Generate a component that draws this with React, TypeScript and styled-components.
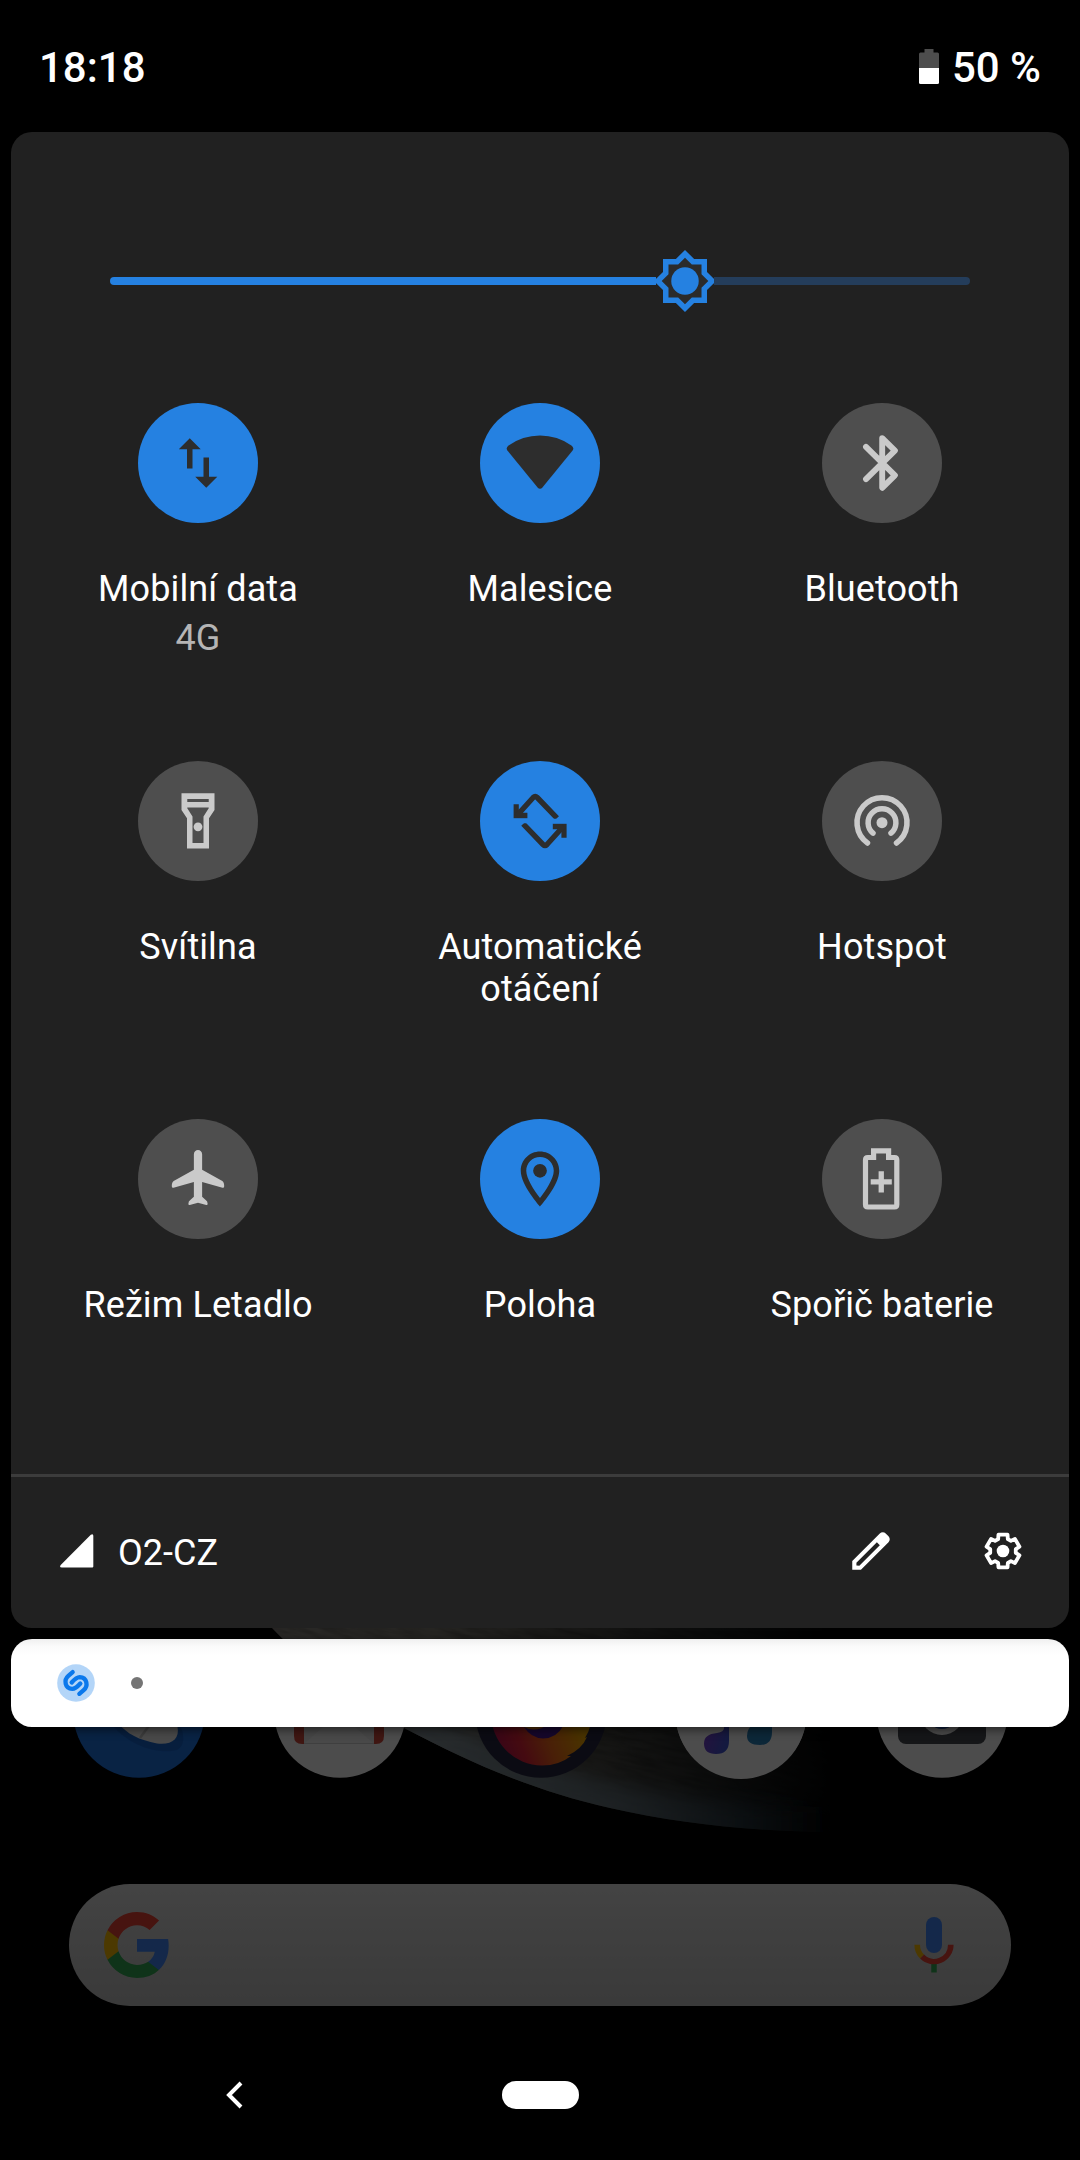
import React from "react";
import styled, { createGlobalStyle } from "styled-components";

const ACCENT = "#2581e1";
const SURFACE = "#212121";

const GlobalStyle = createGlobalStyle`
  *, *::before, *::after { box-sizing: border-box; }
  body {
    margin: 0;
    background: #000;
    font-family: Roboto, "Noto Sans", sans-serif;
    color: #fff;
  }
  svg { display: block; flex: none; }
`;

const Screen = styled.div`
  display: grid;
  grid-template: 2160px / 1080px;
  width: 1080px;
  height: 2160px;
  overflow: hidden;
  background: #000;
  > * { grid-area: 1 / 1; }
`;

/* ---------- Launcher behind the shade ---------- */

const Home = styled.div`
  display: grid;
  grid-template: 2160px / 1080px;
  opacity: 0.3;
  > * { grid-area: 1 / 1; }
`;

const HomeContent = styled.div`
  display: flex;
  flex-direction: column;
  padding: 1647px 69px 0;
`;

const Dock = styled.div`
  display: flex;
  justify-content: space-between;
  padding: 0 3px 0 4px;
  margin-bottom: 105px;
`;

const SearchBar = styled.div`
  display: flex;
  align-items: center;
  justify-content: space-between;
  height: 122px;
  padding: 0 57px 0 35px;
  border-radius: 61px;
  background: linear-gradient(#dedede, #bfbfbf);
`;

/* ---------- Shade ---------- */

const Shade = styled.div`
  display: flex;
  flex-direction: column;
  z-index: 1;
`;

const StatusBar = styled.header`
  display: flex;
  align-items: center;
  justify-content: space-between;
  height: 132px;
  padding: 3px 39px 0 39px;
  font-size: 42px;
  font-weight: 500;
  line-height: 48px;
`;

const BatteryStatus = styled.div`
  display: flex;
  align-items: center;
  gap: 13px;
  > svg { margin-bottom: 2px; }
`;

const Panel = styled.section`
  display: flex;
  flex-direction: column;
  height: 1496px;
  margin: 0 11px;
  border-radius: 21px;
  background: ${SURFACE};
`;

const BrightnessRow = styled.div`
  display: flex;
  align-items: center;
  height: 66px;
  margin: 116px 99px 0;
`;

const Track = styled.div<{ $active?: boolean; $grow: number }>`
  flex: ${(p) => p.$grow} 1 0;
  height: 8px;
  background: ${(p) => (p.$active ? ACCENT : "#243d5b")};
  border-radius: ${(p) => (p.$active ? "4px 0 0 4px" : "0 4px 4px 0")};
`;

const Thumb = styled.div`
  margin: 0 -4px;
`;

const Tiles = styled.div`
  display: grid;
  grid-template-columns: repeat(3, 342px);
  grid-template-rows: 358px 358px 266px;
  padding: 89px 16px 0;
  flex: 1;
`;

const Tile = styled.div`
  display: flex;
  flex-direction: column;
  align-items: center;
`;

const TileButton = styled.div<{ $on?: boolean }>`
  display: flex;
  width: 120px;
  height: 120px;
  border-radius: 50%;
  color: ${(p) => (p.$on ? "#2d2d2d" : "#cacaca")};
  background: ${(p) => (p.$on ? ACCENT : "#4e4e4e")};
`;

const TileLabel = styled.div`
  width: 250px;
  margin-top: 45px;
  font-size: 36px;
  line-height: 42px;
  letter-spacing: 0.1px;
  text-align: center;
`;

const TileDetail = styled.div`
  margin-top: 7px;
  font-size: 36px;
  line-height: 42px;
  color: #b5b5b5;
`;

const Footer = styled.footer`
  display: flex;
  flex: none;
  align-items: center;
  height: 154px;
  padding: 0 41px 3px 49px;
  border-top: 3px solid #3c3c3c;
`;

const Carrier = styled.span`
  flex: 1;
  margin-left: 24px;
  padding-top: 4px;
  font-size: 36px;
  line-height: 42px;
`;

const FooterActions = styled.div`
  display: flex;
  gap: 82px;
`;

const Notification = styled.div`
  display: flex;
  align-items: center;
  gap: 36px;
  height: 88px;
  margin: 11px 11px 0;
  padding-left: 46px;
  border-radius: 21px;
  background: linear-gradient(#efefef, #fafafa 7px, #fff 16px);
  box-shadow: 0 3px 10px rgba(0, 0, 0, 0.5);
`;

const Dot = styled.span`
  width: 12px;
  height: 12px;
  border-radius: 50%;
  background: #757575;
`;

const NavBar = styled.nav`
  display: grid;
  grid-template-columns: 470px 140px 470px;
  align-items: center;
  justify-items: center;
  height: 132px;
  margin-top: auto;
  padding-top: 1px;
`;

const HomePill = styled.span`
  width: 77px;
  height: 28px;
  border-radius: 14px;
  background: #fff;
`;

/* ---------- Tile icons, drawn on the 120px button ---------- */

const Glyph = ({ children }: { children: React.ReactNode }) => (
  <svg width="120" height="120" viewBox="0 0 120 120" fill="currentColor">
    {children}
  </svg>
);

/* Places a 24-unit glyph at 66px in the middle of the button. */
const UNIT = "translate(27 27) scale(2.75)";

const DataIcon = () => (
  <Glyph>
    <path transform={UNIT} d="M16 17.01V10h-2v7.01h-3L15 21l4-3.99h-3zM9 3L5 6.99h3V14h2V6.99h3L9 3z" />
  </Glyph>
);

const WifiIcon = () => (
  <Glyph>
    <path d="M27.400 47.600Q25.600 44.600 28.600 42.400Q42.500 32.400 60 32.400T91.400 42.400Q94.400 44.600 92.600 47.600L62.600 84.200Q60 87.200 57.400 84.200Z" />
  </Glyph>
);

const BluetoothIcon = () => (
  <Glyph>
    <path
      d="M44 43.800L72.900 72.300L60.200 84.800V35.200L72.900 47.700L44 76.200"
      fill="none"
      stroke="currentColor"
      strokeWidth="5.900"
      strokeLinecap="round"
      strokeLinejoin="round"
    />
  </Glyph>
);

const TorchIcon = () => (
  <Glyph>
    <g transform={UNIT}>
      <path
        fillRule="evenodd"
        d="M6 1.900H18V8L16 11V22H8V11L6 8ZM8.100 4V5.100H15.900V4ZM8.100 7.100V7.400L10 10.400V20H14V10.400L15.900 7.400V7.100Z"
      />
      <circle cx="12" cy="14.100" r="1.600" />
    </g>
  </Glyph>
);

const RotateHalf = () => (
  <>
    <path d="M33.600 43.200h5.200v8.600h8.600v5.500h-13.800z" />
    <path
      d="M36.500 55.500L53.200 37Q55.200 35 57.200 37L77 57.600"
      transform="translate(0 -0.500)"
      fill="none"
      stroke="currentColor"
      strokeWidth="5.400"
    />
  </>
);

const RotateIcon = () => (
  <Glyph>
    <clipPath id="rotate-half">
      <path d="M0 0H120V57.800H0Z" />
    </clipPath>
    <g clipPath="url(#rotate-half)">
      <RotateHalf />
    </g>
    <g transform="rotate(180 60.100 60)">
      <g clipPath="url(#rotate-half)">
        <RotateHalf />
      </g>
    </g>
  </Glyph>
);

const HotspotIcon = () => (
  <Glyph>
    <circle cx="60" cy="61.700" r="5.500" />
    <g fill="none" stroke="currentColor" strokeWidth="5.500" strokeLinecap="round">
      <path d="M45.500 82A25 25 0 1 1 74.500 82" />
      <path d="M51 72.200A13.900 13.900 0 1 1 69 72.200" />
    </g>
  </Glyph>
);

const PlaneIcon = () => (
  <Glyph>
    <path
      transform="translate(27 25.500) scale(2.750)"
      d="M13.500 9.200V3.500C13.500 2.670 12.830 2 12 2S10.500 2.670 10.500 3.500V9.200L3.150 13.300C2.600 13.700 2.400 14.600 2.500 15.400Q2.600 15.900 3.100 15.700L10.500 13.600V19L9.200 20.200Q8.500 20.700 8.500 21.500Q8.500 22.200 9 22L12 21.200L15 22Q15.500 22.200 15.500 21.500Q15.500 20.700 14.800 20.200L13.500 19V13.600L20.900 15.700Q21.400 15.900 21.500 15.400C21.600 14.600 21.400 13.700 20.850 13.300Z"
    />
  </Glyph>
);

const LocationIcon = () => (
  <Glyph>
    <g transform={UNIT}>
      <path d="M12 2C8.130 2 5 5.130 5 9c0 5.250 7 13 7 13s7-7.750 7-13c0-3.870-3.130-7-7-7zM7 9c0-2.760 2.240-5 5-5s5 2.240 5 5c0 2.880-2.880 7.190-5 9.880C9.920 16.210 7 11.850 7 9z" />
      <circle cx="12" cy="9" r="2.500" />
    </g>
  </Glyph>
);

const SaverIcon = () => (
  <Glyph>
    <path
      d="M51.600 31.800H66.600V38.500H72.500Q74.800 38.500 74.800 41V85.500Q74.800 88 72.500 88H45.800Q43.500 88 43.500 85.500V41Q43.500 38.500 45.800 38.500H51.600Z"
      fill="none"
      stroke="currentColor"
      strokeWidth="5.200"
    />
    <path d="M56.600 52.300h5.300v8h7.900v5.300h-7.900v8h-5.300v-8h-7.900v-5.300h7.900z" />
  </Glyph>
);

const BrightnessIcon = () => (
  <svg width="66" height="66" viewBox="0 0 24 24">
    <path
      fill={ACCENT}
      d="M20 8.690V4h-4.690L12 .69 8.690 4H4v4.690L.69 12 4 15.310V20h4.690L12 23.310 15.310 20H20v-4.690L23.310 12z"
    />
    <path
      fill="#2b2b2b"
      d="M18 14.480V18h-3.520L12 20.480 9.520 18H6v-3.520L3.520 12 6 9.520V6h3.520L12 3.520 14.480 6H18v3.520L20.480 12z"
    />
    <circle cx="12" cy="12" r="5" fill={ACCENT} />
  </svg>
);

const BatteryIcon = () => (
  <svg width="20" height="35" viewBox="0 0 20 35">
    <path d="M5.500 0H14.500V3.500H18.500Q20 3.500 20 5V19H0V5Q0 3.500 1.500 3.500H5.500Z" fill="#4d4d4d" />
    <path d="M0 19H20V33.500Q20 35 18.500 35H1.500Q0 35 0 33.500Z" fill="#fff" />
  </svg>
);

const SignalIcon = () => (
  <svg width="34" height="34" viewBox="0 0 34 34">
    <path d="M30.800 .8Q33.300-.8 33.300 2V32.500Q33.300 33.500 32.300 33.500H1.800Q-1 33.500 .7 30.900Z" fill="#fff" />
  </svg>
);

const PencilIcon = () => (
  <svg width="50" height="50" viewBox="0 0 24 24" fill="#fff">
    <path d="M20.410 4.940l-1.350-1.350c-.78-.78-2.050-.78-2.830 0L3 16.820V21h4.180L20.410 7.770c.79-.78.79-2.050 0-2.830zm-14 14.120L5 19v-1.360l9.820-9.820 1.410 1.410-9.820 9.830z" />
  </svg>
);

const gearPath = (() => {
  const points: string[] = [];
  for (let i = 0; i < 6; i++) {
    const base = i * 60 - 90;
    const steps: [number, number][] = [
      [-22, 12.900],
      [-15.500, 17],
      [15.500, 17],
      [22, 12.900],
    ];
    steps.forEach(([offset, radius]) => {
      const a = ((base + offset) * Math.PI) / 180;
      points.push(`${(25 + radius * Math.cos(a)).toFixed(2)} ${(25 + radius * Math.sin(a)).toFixed(2)}`);
    });
  }
  return `M${points.join("L")}Z`;
})();

const GearIcon = () => (
  <svg width="50" height="50" viewBox="0 0 50 50">
    <path d={gearPath} fill="none" stroke="#fff" strokeWidth="3.800" strokeLinejoin="round" />
    <circle cx="25" cy="25" r="6.300" fill="#fff" />
  </svg>
);

const ShazamIcon = () => (
  <svg width="38" height="38" viewBox="0 0 38 38">
    <circle cx="19" cy="19" r="18.800" fill="#b3d5f8" />
    <g
      transform="translate(-17.330 -24.170) scale(0.33333)"
      fill="none"
      stroke="#0a78ec"
      strokeWidth="13"
      strokeLinecap="round"
    >
      <path d="M99 97L86 108C72 120 75 146 98 147C107 147 114 140 122 131" />
      <path d="M119 162L132 151C146 139 143 113 120 112C111 112 104 119 96 128" />
    </g>
  </svg>
);

const BackIcon = () => (
  <svg width="18" height="28" viewBox="0 0 18 28">
    <path d="M15 2L3 14L15 26" fill="none" stroke="#fff" strokeWidth="4" />
  </svg>
);

/* ---------- Launcher artwork ---------- */

const Wallpaper = () => (
  <svg width="1080" height="2160" viewBox="0 0 1080 2160">
    <defs>
      <linearGradient id="planet" gradientUnits="userSpaceOnUse" x1="270" y1="1700" x2="840" y2="1650">
        <stop offset="0" stopColor="#8a8680" />
        <stop offset="0.300" stopColor="#7a776e" />
        <stop offset="0.550" stopColor="#4c4b46" />
        <stop offset="0.800" stopColor="#1d2020" />
        <stop offset="1" stopColor="#000" />
      </linearGradient>
      <linearGradient id="rim" gradientUnits="userSpaceOnUse" x1="400" y1="0" x2="830" y2="0">
        <stop offset="0" stopColor="#8896a0" />
        <stop offset="0.500" stopColor="#65747d" />
        <stop offset="0.800" stopColor="#283640" />
        <stop offset="1" stopColor="#000" />
      </linearGradient>
      <clipPath id="planet-shape">
        <path d="M272 1628C310 1668 360 1705 404 1728C480 1768 540 1792 610 1808C680 1824 750 1831 830 1832V1600H250Z" />
      </clipPath>
      <filter id="soft" x="-20%" y="-50%" width="140%" height="200%">
        <feGaussianBlur stdDeviation="9" />
      </filter>
      <filter id="grain" x="0" y="0" width="100%" height="100%">
        <feTurbulence type="fractalNoise" baseFrequency="0.030 0.200" numOctaves="4" seed="4" />
        <feColorMatrix values="0 0 0 0 0  0 0 0 0 0  0 0 0 0 0  1.600 0 0 0 -0.550" />
      </filter>
    </defs>
    <g clipPath="url(#planet-shape)">
      <path d="M250 1600H850V1850H250Z" fill="url(#planet)" />
      <g transform="rotate(14 520 1720)" opacity="0.280">
        <rect x="220" y="1540" width="640" height="380" filter="url(#grain)" />
      </g>
      <path
        d="M404 1728C480 1768 540 1792 610 1808C680 1824 750 1831 830 1832"
        fill="none"
        stroke="url(#rim)"
        strokeWidth="50"
        opacity="0.850"
        filter="url(#soft)"
      />
    </g>
  </svg>
);

const AppIcon = ({ fill, children }: { fill: string; children: React.ReactNode }) => (
  <svg width="132" height="132" viewBox="0 0 132 132">
    <circle cx="66" cy="65" r="65.800" fill={fill} />
    {children}
  </svg>
);

const PhoneApp = () => (
  <AppIcon fill="#1e73e2">
    <path
      d="M40 79C56 98 84 108 104 103Q113 98 109 83L100 70H40Z"
      fill="#145cc0"
      opacity="0.700"
    />
    <path d="M45 76C54 87 66 93 84 96.500C98 98.500 107 92 104.500 80L98 66H45Z" fill="#f0f0f0" />
    <path d="M67 91L78 76" stroke="#c7c7c7" strokeWidth="2.500" />
  </AppIcon>
);

const MailApp = () => (
  <AppIcon fill="#fcfcfc">
    <path d="M20 40H110V89Q110 97 102 97H28Q20 97 20 89Z" fill="#d24a3e" />
    <path d="M30 40H100V97H30Z" fill="#e9e9e9" />
    <path d="M30 97L65 66L100 97Z" fill="#f2f2f2" />
    <path d="M30 96.500H100" stroke="#cfcfcf" />
  </AppIcon>
);

const FirefoxApp = () => (
  <AppIcon fill="#262640">
    <defs>
      <linearGradient id="fox" gradientUnits="userSpaceOnUse" x1="20" y1="100" x2="100" y2="70">
        <stop offset="0" stopColor="#b81050" />
        <stop offset="0.300" stopColor="#e32438" />
        <stop offset="0.600" stopColor="#f0661c" />
        <stop offset="1" stopColor="#f0a800" />
      </linearGradient>
    </defs>
    <path d="M16 66A51 52 0 0 0 67 118.500Q84 118.500 96 109L92 109Q107 102 112 90L110 91Q117 80 117 66Z" fill="url(#fox)" />
    <path d="M49 80Q56 91 68 91.500Q82 91 88 79V74H49Z" fill="#4a1790" />
    <path d="M47 79Q60 87 74 77V66H45Z" fill="#f58a1c" />
  </AppIcon>
);

const MusicApp = () => (
  <AppIcon fill="#fcfcfc">
    <defs>
      <linearGradient id="note" x1="0" y1="0" x2="1" y2="0.600">
        <stop offset="0" stopColor="#8a35c8" />
        <stop offset="1" stopColor="#4055d0" />
      </linearGradient>
    </defs>
    <circle cx="66" cy="66.500" r="65.500" fill="#fcfcfc" />
    <path d="M49 60H54V94Q54 107 41 107Q29 107 29 96.500Q29 87 42 86Q49 85 49 81Z" fill="url(#note)" />
    <path d="M92 60H97V85Q97 98 85 98Q72 98 72 89Q72 81 78 78Q92 75 92 68Z" fill="#2a80bb" />
  </AppIcon>
);

const CameraApp = () => (
  <AppIcon fill="#fcfcfc">
    <rect x="22" y="40" width="88" height="57" rx="8" fill="#464a50" />
    <circle cx="66" cy="66" r="22" fill="#f4f4f4" />
    <circle cx="66" cy="66" r="16" fill="#2c5eb4" />
  </AppIcon>
);

const GoogleLogo = () => (
  <svg width="66" height="66" viewBox="0 0 18 18">
    <path fill="#4285F4" d="M17.640 9.205c0-.639-.057-1.252-.164-1.841H9v3.481h4.844a4.140 4.140 0 0 1-1.796 2.716v2.259h2.908c1.702-1.567 2.684-3.875 2.684-6.615z" />
    <path fill="#34A853" d="M9 18c2.430 0 4.467-.806 5.956-2.180l-2.908-2.259c-.806.540-1.837.860-3.048.860-2.344 0-4.328-1.584-5.036-3.711H.957v2.332A8.997 8.997 0 0 0 9 18z" />
    <path fill="#FBBC05" d="M3.964 10.710A5.410 5.410 0 0 1 3.682 9c0-.593.102-1.170.282-1.710V4.958H.957A8.996 8.996 0 0 0 0 9c0 1.452.348 2.827.957 4.042l3.007-2.332z" />
    <path fill="#EA4335" d="M9 3.580c1.321 0 2.508.454 3.440 1.345l2.582-2.580C13.463.891 11.426 0 9 0A8.997 8.997 0 0 0 .957 4.958L3.964 7.290C4.672 5.163 6.656 3.580 9 3.580z" />
  </svg>
);

const MicIcon = () => (
  <svg width="40" height="56" viewBox="0 0 40 56">
    <rect x="12" y="0" width="16" height="36" rx="8" fill="#4285F4" />
    <path d="M20 47V55.500" stroke="#34A853" strokeWidth="5.500" />
    <path d="M3.200 27.700A16.800 16.800 0 0 0 8.100 39.600" fill="none" stroke="#FBBC05" strokeWidth="5.600" />
    <path d="M8.100 39.600A16.800 16.800 0 0 0 36.800 27.700" fill="none" stroke="#EA4335" strokeWidth="5.600" />
  </svg>
);

/* ---------- Page ---------- */

interface TileData {
  label: string;
  detail?: string;
  on?: boolean;
  Icon: () => React.ReactElement;
}

const TILES: TileData[] = [
  { label: "Mobilní data", detail: "4G", on: true, Icon: DataIcon },
  { label: "Malesice", on: true, Icon: WifiIcon },
  { label: "Bluetooth", Icon: BluetoothIcon },
  { label: "Svítilna", Icon: TorchIcon },
  { label: "Automatické otáčení", on: true, Icon: RotateIcon },
  { label: "Hotspot", Icon: HotspotIcon },
  { label: "Režim Letadlo", Icon: PlaneIcon },
  { label: "Poloha", on: true, Icon: LocationIcon },
  { label: "Spořič baterie", Icon: SaverIcon },
];

export default function App() {
  return (
    <Screen>
      <GlobalStyle />
      <Home>
        <Wallpaper />
        <HomeContent>
          <Dock>
            <PhoneApp />
            <MailApp />
            <FirefoxApp />
            <MusicApp />
            <CameraApp />
          </Dock>
          <SearchBar>
            <GoogleLogo />
            <MicIcon />
          </SearchBar>
        </HomeContent>
      </Home>
      <Shade>
        <StatusBar>
          <span>18:18</span>
          <BatteryStatus>
            <BatteryIcon />
            <span>50 %</span>
          </BatteryStatus>
        </StatusBar>
        <Panel>
          <BrightnessRow>
            <Track $active $grow={546} />
            <Thumb>
              <BrightnessIcon />
            </Thumb>
            <Track $grow={256} />
          </BrightnessRow>
          <Tiles>
            {TILES.map(({ label, detail, on, Icon }) => (
              <Tile key={label}>
                <TileButton $on={on}>
                  <Icon />
                </TileButton>
                <TileLabel>{label}</TileLabel>
                {detail && <TileDetail>{detail}</TileDetail>}
              </Tile>
            ))}
          </Tiles>
          <Footer>
            <SignalIcon />
            <Carrier>O2-CZ</Carrier>
            <FooterActions>
              <PencilIcon />
              <GearIcon />
            </FooterActions>
          </Footer>
        </Panel>
        <Notification>
          <ShazamIcon />
          <Dot />
        </Notification>
        <NavBar>
          <BackIcon />
          <HomePill />
        </NavBar>
      </Shade>
    </Screen>
  );
}
